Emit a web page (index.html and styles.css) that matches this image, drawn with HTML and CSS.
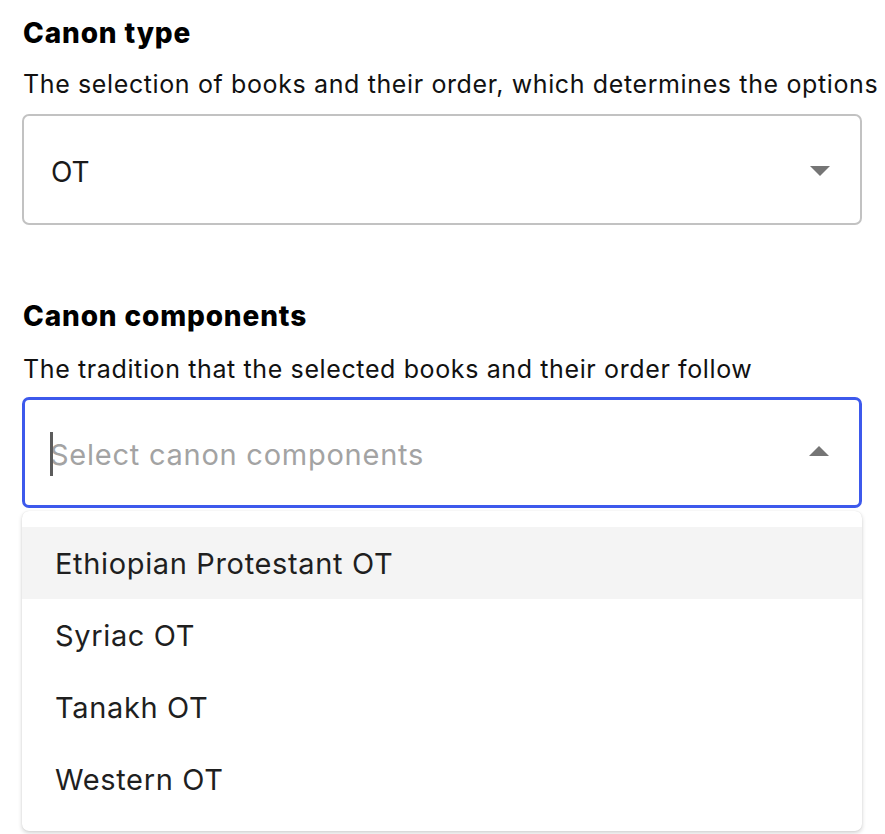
FILE: index.html
```html
<!DOCTYPE html>
<html lang="en">
<head>
<meta charset="utf-8">
<title>Canon settings</title>
<link rel="stylesheet" href="styles.css">
</head>
<body>
<div class="form">
  <section class="field">
    <h2 class="label">Canon type</h2>
    <p class="desc">The selection of books and their order, which determines the options</p>
    <div class="select">
      <span class="value">OT</span>
      <span class="arrow arrow-down"></span>
    </div>
  </section>
  <section class="field field-second">
    <h2 class="label">Canon components</h2>
    <p class="desc desc-second">The tradition that the selected books and their order follow</p>
    <div class="combo">
      <div class="select select-focused">
        <span class="caret"></span>
        <span class="placeholder">Select canon components</span>
        <span class="arrow arrow-up"></span>
      </div>
      <ul class="menu">
        <li class="option option-active">Ethiopian Protestant OT</li>
        <li class="option">Syriac OT</li>
        <li class="option">Tanakh OT</li>
        <li class="option">Western OT</li>
      </ul>
    </div>
  </section>
</div>
</body>
</html>
```

FILE: styles.css
```css
html, body {
  margin: 0;
  padding: 0;
  background: #ffffff;
}
body {
  font-family: "Inter", "Liberation Sans", sans-serif;
  color: #1a1a1a;
  min-height: 834px;
}
.form {
  width: 840px;
  margin-left: 22px;
  padding-top: 16px;
}
.field {
  display: flex;
  flex-direction: column;
}
.field-second {
  margin-top: 74px;
}
.label {
  margin: 0;
  font-size: 28px;
  line-height: 34px;
  font-weight: 800;
  letter-spacing: 0.85px;
  color: #000;
  padding-left: 1px;
}
.desc {
  margin: 19px 0 0;
  font-size: 25px;
  line-height: 30px;
  letter-spacing: 0.62px;
  white-space: nowrap;
  color: #111;
  padding-left: 1px;
}
.desc-second {
  margin-top: 21px;
}
.select {
  margin-top: 15px;
  box-sizing: border-box;
  height: 111px;
  border: 2px solid #c2c2c2;
  border-radius: 7px;
  display: flex;
  align-items: center;
  padding: 0 30px 0 27px;
  font-size: 28px;
  color: #1a1a1a;
}
.value {
  flex: 1;
  padding-top: 4px;
}
.combo {
  position: relative;
  margin-top: 13px;
}
.select-focused {
  margin-top: 0;
  border: 3px solid #3d59ec;
  padding-left: 25px;
  position: relative;
}
.caret {
  width: 3px;
  height: 44px;
  background: #5c5c5c;
  position: absolute;
  left: 25px;
  top: 32px;
}
.placeholder {
  flex: 1;
  color: #a3a3a3;
  font-size: 29px;
  letter-spacing: 0.75px;
  padding-top: 4px;
}
.arrow {
  width: 0;
  height: 0;
  border-left: 10px solid transparent;
  border-right: 10px solid transparent;
}
.arrow-down {
  border-top: 10px solid #757575;
  margin-top: 2px;
}
.arrow-up {
  border-bottom: 10px solid #757575;
  margin-top: -4px;
}
.menu {
  position: absolute;
  z-index: 2;
  left: 0;
  right: 0;
  top: 114px;
  margin: 0;
  padding: 16px 0;
  list-style: none;
  background: #ffffff;
  border-radius: 7px;
  box-shadow: 0 2px 4px rgba(0, 0, 0, 0.18), 0 0 1px rgba(0, 0, 0, 0.12);
}
.option {
  height: 72px;
  display: flex;
  align-items: center;
  padding-left: 33px;
  font-size: 29px;
  letter-spacing: 0.65px;
  color: #1f1f1f;
}
.option-active {
  background: #f4f4f4;
}
```
